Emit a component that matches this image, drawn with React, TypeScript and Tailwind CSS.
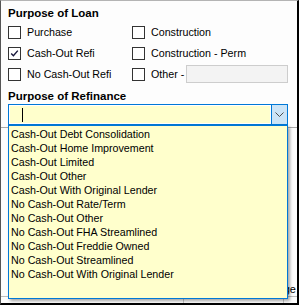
import React from 'react';

const refinanceOptions = [
  'Cash-Out Debt Consolidation',
  'Cash-Out Home Improvement',
  'Cash-Out Limited',
  'Cash-Out Other',
  'Cash-Out With Original Lender',
  'No Cash-Out Rate/Term',
  'No Cash-Out Other',
  'No Cash-Out FHA Streamlined',
  'No Cash-Out Freddie Owned',
  'No Cash-Out Streamlined',
  'No Cash-Out With Original Lender',
];

function CheckBox({ label, checked = false }: { label: string; checked?: boolean }) {
  return (
    <div className="flex items-center gap-[6px]">
      <div className="w-[13px] h-[13px] border border-[#333] bg-white flex items-center justify-center shrink-0">
        {checked && (
          <svg width="9" height="9" viewBox="0 0 9 9">
            <path d="M1.2 4.6 L3.4 6.8 L7.8 1.6" fill="none" stroke="#15153a" strokeWidth="1.4" />
          </svg>
        )}
      </div>
      <span className="whitespace-nowrap">{label}</span>
    </div>
  );
}

export default function App() {
  return (
    <div className="w-[299px] h-[305px] relative overflow-hidden flex flex-col bg-[#fdfdfd] border-l border-t border-r-2 border-b-2 border-l-[#555] border-t-[#b4b4b4] border-r-black border-b-black font-['Liberation_Sans',Arial,sans-serif] text-black text-[10.7px] leading-[14px] pl-[7px] pt-[5px] pr-[9px]">
      <div className="text-[11.5px] font-bold">Purpose of Loan</div>

      <div className="mt-[2px] flex flex-col gap-[1px]">
        <div className="flex h-[20px] items-center">
          <div className="w-[124px]"><CheckBox label="Purchase" /></div>
          <CheckBox label="Construction" />
        </div>
        <div className="flex h-[20px] items-center">
          <div className="w-[124px]"><CheckBox label="Cash-Out Refi" checked /></div>
          <CheckBox label="Construction - Perm" />
        </div>
        <div className="flex h-[20px] items-center">
          <div className="w-[124px]"><CheckBox label="No Cash-Out Refi" /></div>
          <div className="flex flex-1 items-center gap-[2px]">
            <CheckBox label="Other -" />
            <div className="flex-1 h-[18px] border border-[#cdcdcd] bg-[#f3f3f3]" />
          </div>
        </div>
      </div>

      <div className="mt-[5px] text-[11.5px] font-bold">Purpose of Refinance</div>

      {/* combo box */}
      <div className="mt-[1px] h-[21px] flex border border-[#0078d7]">
        <div className="flex-1 p-[1px] bg-white">
          <div className="h-full bg-[#ffffcc] flex items-center pl-[12px]">
            <span className="w-px h-[14px] bg-black" />
          </div>
        </div>
        <div className="w-[16px] border-l border-[#0078d7] bg-[#cce4f7] flex items-center justify-center">
          <svg width="9" height="5" viewBox="0 0 9 5">
            <path d="M0.5 0.5 L4.5 4.5 L8.5 0.5" fill="none" stroke="#4d4d4d" strokeWidth="1" />
          </svg>
        </div>
      </div>

      <div className="mt-[2px] -ml-[7px] -mr-[9px] h-px bg-[#a9a9a9]" />

      {/* content behind the open list */}
      <div className="mt-auto -ml-[7px] -mr-[9px]">
        <div className="h-[14px] flex justify-end pr-[1px] text-[11px]">Change</div>
        <div className="h-px bg-[#bdbdbd]" />
        <div className="h-[6px] flex">
          <div className="w-[183px] border-r border-[#c8c8c8]" />
          <div className="w-[100px] border-r border-[#c8c8c8]" />
        </div>
      </div>

      {/* open dropdown list */}
      <div className="absolute left-[7px] top-[124px] w-[280px] h-[174px] border border-[#0078d7] bg-[#ffffcc] shadow-[2px_2px_3px_rgba(0,0,0,0.35)] pt-[1px] pl-[2px]">
        {refinanceOptions.map((opt) => (
          <div key={opt} className="h-[14px] whitespace-nowrap">{opt}</div>
        ))}
      </div>
    </div>
  );
}
